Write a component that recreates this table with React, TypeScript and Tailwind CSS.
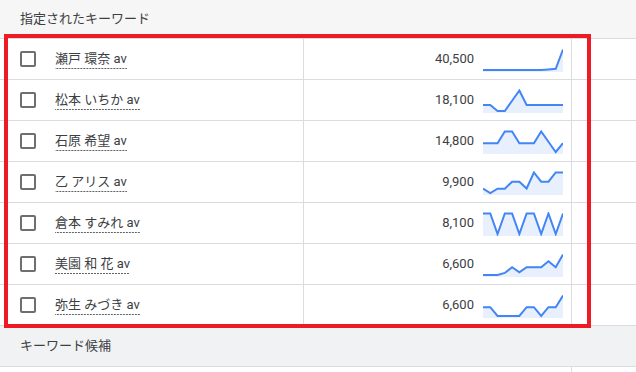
import React from "react";

type Row = { keyword: string; volume: string; trend: number[] };

const rows: Row[] = [
  { keyword: "瀬戸 環奈 av", volume: "40,500", trend: [0, 0, 0, 0, 0, 0, 0, 0, 0, 0.03, 0.06, 1] },
  { keyword: "松本 いちか av", volume: "18,100", trend: [0.29, 0.29, 0, 0, 0.5, 1, 0.29, 0.29, 0.29, 0.29, 0.29, 0.29] },
  { keyword: "石原 希望 av", volume: "14,800", trend: [0.43, 0.43, 0.43, 1, 1, 0.43, 0.43, 0.43, 1, 0.5, 0, 0.43] },
  { keyword: "乙 アリス av", volume: "9,900", trend: [0.22, 0, 0.21, 0.21, 0.55, 0.55, 0.22, 1, 0.55, 0.55, 1, 1] },
  { keyword: "倉本 すみれ av", volume: "8,100", trend: [1, 1, 0, 1, 1, 0, 1, 1, 0, 1, 0, 1] },
  { keyword: "美園 和 花 av", volume: "6,600", trend: [0, 0, 0, 0.1, 0.38, 0.13, 0.38, 0.38, 0.38, 0.67, 0.38, 1] },
  { keyword: "弥生 みづき av", volume: "6,600", trend: [0.43, 0.43, 0, 0, 0, 0, 0.43, 0.43, 0, 0.43, 0.43, 1] },
];

// 小さな推移グラフ（80x24）
function Sparkline({ data }: { data: number[] }) {
  const w = 80;
  const h = 24;
  const step = w / (data.length - 1);
  const pts = data.map((v, i) => `${(i * step).toFixed(2)},${(1.5 + (1 - v) * 20.5).toFixed(2)}`);
  const area = `0,${h} ${pts.join(" ")} ${w},${h}`;
  return (
    <svg width={w} height={h} viewBox={`0 0 ${w} ${h}`} className="block">
      <polygon points={area} fill="#e8f0fe" />
      <polyline points={pts.join(" ")} fill="none" stroke="#4285f4" strokeWidth={2} strokeLinejoin="miter" />
    </svg>
  );
}

function KeywordRow({ row }: { row: Row }) {
  return (
    <div className="flex h-[41px] border-b border-[#dadce0]">
      <div className="flex w-[304px] items-center border-r border-[#dadce0] pl-5">
        <div className="h-4 w-4 rounded-[2px] border-2 border-[#6f6f6f]" />
        <span className="ml-[19px] inline-block bg-[linear-gradient(to_right,#5f6368_66%,transparent_0)] bg-[length:3px_1px] bg-bottom bg-repeat-x pb-[2px] pt-[1px] text-[13px] leading-[16px] text-[#3c4043]">
          {row.keyword}
        </span>
      </div>
      <div className="flex w-[268px] items-center border-r border-[#dadce0] pr-2">
        <span className="flex-1 text-right text-[13px] text-[#3c4043]">{row.volume}</span>
        <div className="ml-[9px] pt-[2px]">
          <Sparkline data={row.trend} />
        </div>
      </div>
      <div className="flex-1" />
    </div>
  );
}

export default function App() {
  return (
    <div
      className="relative h-[372px] w-[636px] overflow-hidden bg-white"
      style={{ fontFamily: 'Roboto, "Noto Sans CJK JP", sans-serif' }}
    >
      {/* 見出し */}
      <div className="flex h-[39px] items-center border-b border-[#dadce0] bg-[#f6f6f6] pl-5 text-[13px] text-[#3c4043]">
        指定されたキーワード
      </div>

      {rows.map((r) => (
        <KeywordRow key={r.keyword} row={r} />
      ))}

      <div className="flex h-[41px] items-center border-b border-[#dadce0] bg-[#f1f2f4] pl-5 text-[13px] text-[#3c4043]">
        キーワード候補
      </div>
      <div className="flex h-[10px]">
        <div className="w-[572px] border-r border-[#dadce0]" />
      </div>

      {/* 赤枠の注釈 */}
      <div className="pointer-events-none absolute left-[4px] top-[34px] h-[294px] w-[587px] border-4 border-[#ed1c24]" />
    </div>
  );
}
